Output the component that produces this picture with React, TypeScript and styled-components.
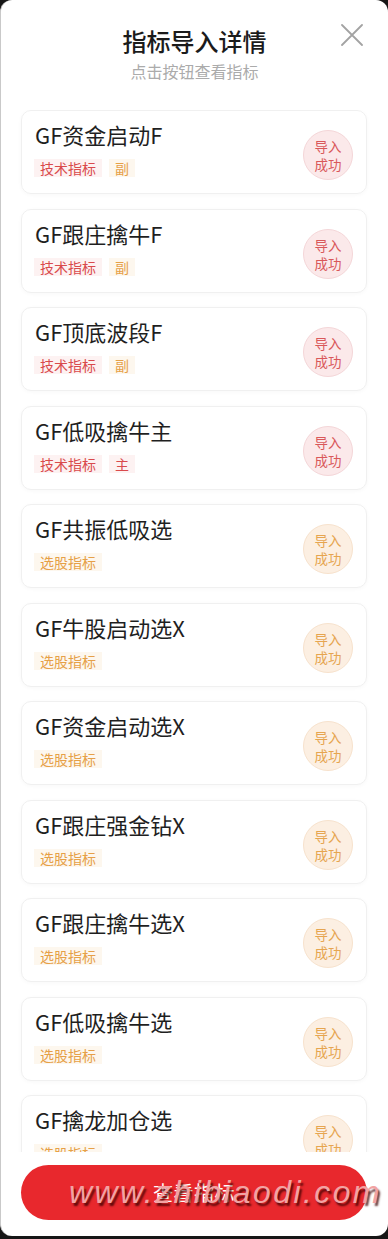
import React from "react";
import styled, { createGlobalStyle, css } from "styled-components";

const Global = createGlobalStyle`
  html, body { margin: 0; padding: 0; background: #161616; }
  body { font-family: "Noto Sans CJK SC", "Noto Sans", sans-serif; }
  * { box-sizing: border-box; }
`;

type Tone = "red" | "orange";

const tones = {
  red: { text: "#d94a4c", tagBg: "#fdf2f2", badgeBg: "#fbe9ea", badgeBorder: "#f4d6d8", badgeText: "#d9585a" },
  orange: { text: "#e6a047", tagBg: "#fdf7ee", badgeBg: "#fcefe2", badgeBorder: "#f7e2cd", badgeText: "#e6a550" },
};

const Modal = styled.div`
  position: relative;
  width: 388px;
  height: 1236px;
  background: #ffffff;
  border-radius: 12px;
  border-left: 1px solid #c9c9c9;
  display: flex;
  flex-direction: column;
  overflow: hidden;
`;

const Header = styled.header`
  position: relative;
  padding: 25px 0 28px;
  display: flex;
  flex-direction: column;
  align-items: center;
  gap: 4px;
`;

const Title = styled.h1`
  margin: 0;
  font-size: 24px;
  line-height: 32px;
  font-weight: 500;
  color: #1b1b1b;
`;

const Subtitle = styled.p`
  margin: 0;
  font-size: 16px;
  line-height: 21px;
  color: #ababab;
`;

const Close = styled.button`
  position: absolute;
  top: 23px;
  right: 24px;
  width: 24px;
  height: 24px;
  padding: 0;
  border: 0;
  background: transparent;
  display: flex;
  align-items: center;
  justify-content: center;
`;

const List = styled.div`
  height: 1042px;
  overflow: hidden;
  padding: 0 21px 0 20px;
  display: flex;
  flex-direction: column;
  gap: 14.5px;
`;

const Card = styled.div`
  flex: 0 0 84px;
  border: 1px solid #f0f0f0;
  border-radius: 10px;
  box-shadow: 0 1px 4px rgba(0, 0, 0, 0.03);
  padding: 0 13px;
  display: flex;
  justify-content: space-between;
  align-items: flex-start;
`;

const Info = styled.div`
  padding-top: 9px;
  display: flex;
  flex-direction: column;
  gap: 11px;
`;

const Name = styled.div`
  font-size: 22px;
  line-height: 28px;
  color: #1f1f1f;
`;

const Tags = styled.div`
  display: flex;
  gap: 7px;
  margin-left: -1px;
`;

const Tag = styled.span<{ $tone: Tone }>`
  height: 18px;
  line-height: 18px;
  padding: 0 6px;
  font-size: 14px;
  ${({ $tone }) => css`
    color: ${tones[$tone].text};
    background: ${tones[$tone].tagBg};
  `}
`;

const Badge = styled.div<{ $tone: Tone }>`
  margin-top: 19px;
  width: 50px;
  height: 50px;
  border-radius: 50%;
  display: flex;
  align-items: center;
  justify-content: center;
  text-align: center;
  font-size: 13.5px;
  line-height: 18px;
  ${({ $tone }) => css`
    color: ${tones[$tone].badgeText};
    background: ${tones[$tone].badgeBg};
    border: 1px solid ${tones[$tone].badgeBorder};
  `}
`;

const Footer = styled.div`
  position: relative;
  padding: 13px 21px 0 20px;
`;

const ViewButton = styled.button`
  width: 100%;
  height: 55px;
  border: 0;
  border-radius: 28px;
  background: #e8282d;
  color: #ffffff;
  font-family: "Noto Sans CJK SC", sans-serif;
  font-size: 20px;
  letter-spacing: 0.5px;
`;

const Watermark = styled.div`
  position: absolute;
  left: 68px;
  top: 20px;
  font-family: "Liberation Sans", Arial, sans-serif;
  font-style: italic;
  font-size: 32px;
  letter-spacing: 2.4px;
  line-height: 40px;
  color: #f2a3a3;
  text-shadow: 2px 3px 2px rgba(60, 0, 0, 0.8);
  pointer-events: none;
  white-space: nowrap;
`;

type Item = { name: string; kind: "tech" | "stock"; level?: "副" | "主" };

const items: Item[] = [
  { name: "GF资金启动F", kind: "tech", level: "副" },
  { name: "GF跟庄擒牛F", kind: "tech", level: "副" },
  { name: "GF顶底波段F", kind: "tech", level: "副" },
  { name: "GF低吸擒牛主", kind: "tech", level: "主" },
  { name: "GF共振低吸选", kind: "stock" },
  { name: "GF牛股启动选X", kind: "stock" },
  { name: "GF资金启动选X", kind: "stock" },
  { name: "GF跟庄强金钻X", kind: "stock" },
  { name: "GF跟庄擒牛选X", kind: "stock" },
  { name: "GF低吸擒牛选", kind: "stock" },
  { name: "GF擒龙加仓选", kind: "stock" },
];

export default function App() {
  return (
    <>
      <Global />
      <Modal>
        <Header>
          <Title>指标导入详情</Title>
          <Subtitle>点击按钮查看指标</Subtitle>
          <Close aria-label="关闭">
            <svg width="22" height="22" viewBox="0 0 22 22">
              <path d="M1 1 L21 21 M21 1 L1 21" stroke="#a3a3a3" strokeWidth="1.8" strokeLinecap="round" />
            </svg>
          </Close>
        </Header>
        <List>
          {items.map((it) => {
            const tone: Tone = it.kind === "tech" ? "red" : "orange";
            return (
              <Card key={it.name}>
                <Info>
                  <Name>{it.name}</Name>
                  <Tags>
                    <Tag $tone={tone}>{it.kind === "tech" ? "技术指标" : "选股指标"}</Tag>
                    {it.level && <Tag $tone={it.level === "副" ? "orange" : "red"}>{it.level}</Tag>}
                  </Tags>
                </Info>
                <Badge $tone={tone}>
                  导入
                  <br />
                  成功
                </Badge>
              </Card>
            );
          })}
        </List>
        <Footer>
          <ViewButton>查看指标</ViewButton>
          <Watermark>www.zhibiaodi.com</Watermark>
        </Footer>
      </Modal>
    </>
  );
}
